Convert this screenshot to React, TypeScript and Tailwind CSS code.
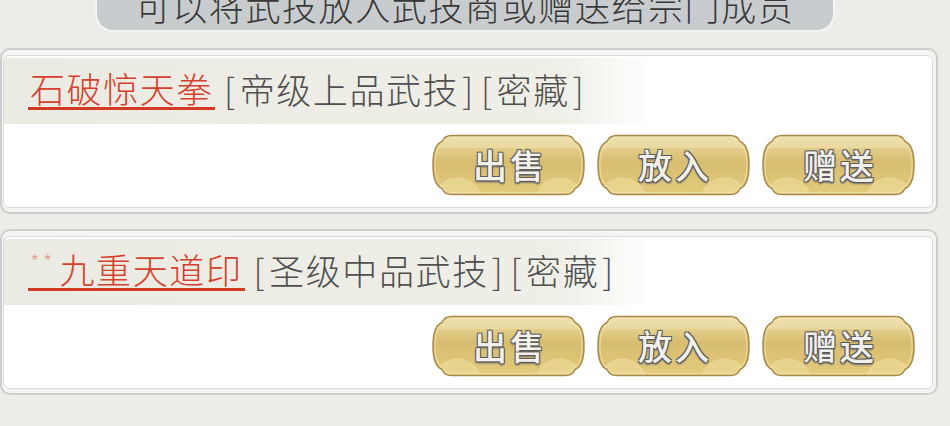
const FONT = "font-['Noto_Sans_CJK_SC',sans-serif]"

interface Skill {
  id: string
  prefix?: string
  name: string
  tags: string[]
}

const skills: Skill[] = [
  { id: 'a', name: '石破惊天拳', tags: ['帝级上品武技', '密藏'] },
  { id: 'b', prefix: '**', name: '九重天道印', tags: ['圣级中品武技', '密藏'] }
]

const BTN_PATH =
  'M20 1.5 H134 C140 1.5 142 4 143.5 7.5 C150 10 152.5 20 152.5 31 C152.5 42 150 52 143.5 54.5 C142 58 140 60.5 134 60.5 H20 C14 60.5 12 58 10.5 54.5 C4 52 1.5 42 1.5 31 C1.5 20 4 10 10.5 7.5 C12 4 14 1.5 20 1.5 Z'

const GoldButton = ({ label, uid }: { label: string; uid: string }) => (
  <button className="relative w-[155px] h-[62px] flex items-center justify-center">
    <svg className="absolute inset-0" width="155" height="62" viewBox="0 0 154 62">
      <defs>
        <linearGradient id={`g-${uid}`} x1="0" y1="0" x2="0" y2="1">
          <stop offset="0" stopColor="#ecdda4" />
          <stop offset="0.45" stopColor="#d8bd70" />
          <stop offset="1" stopColor="#e4cb7c" />
        </linearGradient>
        <clipPath id={`c-${uid}`}>
          <path d={BTN_PATH} />
        </clipPath>
      </defs>
      <path d={BTN_PATH} fill={`url(#g-${uid})`} />
      <g clipPath={`url(#c-${uid})`}>
        <circle cx="26" cy="68" r="24" fill="#efdf9e" opacity="0.55" stroke="#f4e8bb" strokeWidth="1" />
        <circle cx="128" cy="68" r="24" fill="#efdf9e" opacity="0.55" stroke="#f4e8bb" strokeWidth="1" />
        <rect x="0" y="0" width="154" height="14" fill="#f6ecc4" opacity="0.35" />
      </g>
      <path
        d="M20 3.5 H134 C139 3.5 140.5 5.5 142 9 C148.5 11.5 150.5 21 150.5 31 C150.5 41 148.5 50.5 142 53 C140.5 56.5 139 58.5 134 58.5 H20 C15 58.5 13.5 56.5 12 53 C5.5 50.5 3.5 41 3.5 31 C3.5 21 5.5 11.5 12 9 C13.5 5.5 15 3.5 20 3.5 Z"
        fill="none"
        stroke="#f1e4b0"
        strokeWidth="1"
        opacity="0.8"
      />
      <path d={BTN_PATH} fill="none" stroke="#a8894a" strokeWidth="1.5" />
    </svg>
    <span
      className={`relative ${FONT} text-[34px] leading-none font-medium tracking-[3px] pl-[3px] text-[#f2f0ea] [text-shadow:1px_1px_0_#5c5c5c,-1px_-1px_0_#5c5c5c,1px_-1px_0_#5c5c5c,-1px_1px_0_#5c5c5c,0_2px_2px_#6e6e6e]`}
    >
      {label}
    </span>
  </button>
)

const SkillCard = ({ skill }: { skill: Skill }) => (
  <div className="w-[938px] rounded-[10px] border-2 border-[#cdcdcb] bg-[#f4f4f2] pl-[1px] pr-[3px] pt-[5px] pb-[4px]">
    <div className="rounded-[6px] border border-[#dadad8] bg-white pt-[2px] overflow-hidden">
      {/* Header */}
      <div className="h-[66px] flex items-center pl-[24px] pb-[4px] bg-gradient-to-r from-[#ebebe3] via-[#efefe8] via-60% to-white to-70%">
        <span className={`${FONT} font-light text-[35px] leading-[38px] tracking-[1.6px] text-[#d6402e] border-b-[3px] border-[#d23a24] px-[2px]`}>
          {skill.prefix && (
            <span className="text-[22px] align-top leading-[22px] text-[#eaa59e] tracking-[3px] mr-[4px]">{skill.prefix}</span>
          )}
          {skill.name}
        </span>
        <span className={`${FONT} font-light text-[35px] leading-[38px] tracking-[1.6px] text-[#505050] ml-[6px]`}>
          {skill.tags.map((t) => (
            <span key={t}>
              <span className="mx-[3px]">[</span>
              {t}
              <span className="mx-[3px]">]</span>
            </span>
          ))}
        </span>
      </div>
      {/* Actions */}
      <div className="flex justify-end gap-[10px] pr-[16px] pt-[10px] pb-[11px]">
        <GoldButton label="出售" uid={`${skill.id}1`} />
        <GoldButton label="放入" uid={`${skill.id}2`} />
        <GoldButton label="赠送" uid={`${skill.id}3`} />
      </div>
    </div>
  </div>
)

export default function App() {
  return (
    <div className="w-[950px] h-[426px] overflow-hidden bg-[#ecece9]">
      {/* Hint banner */}
      <div className="flex items-end h-[32px]">
        <div className="ml-[95px] w-[740px] h-[52px] shrink-0 rounded-b-[18px] border-2 border-t-0 border-[#f4f4f2] bg-[#c9ccce] flex justify-center pt-[8px]">
          <span className={`${FONT} font-light text-[35px] leading-[36px] tracking-[1.6px] text-[#383838]`}>
            可以将武技放入武技商或赠送给宗门成员
          </span>
        </div>
      </div>
      <div className="flex flex-col gap-[15px] mt-[16px]">
        {skills.map((s) => (
          <SkillCard key={s.id} skill={s} />
        ))}
      </div>
    </div>
  )
}
